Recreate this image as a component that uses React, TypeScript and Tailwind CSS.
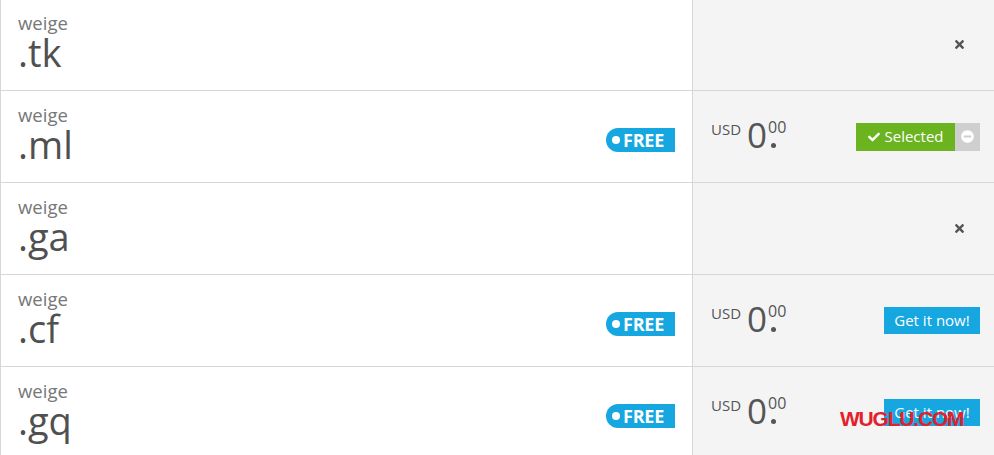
import { FaCheck, FaMinusCircle, FaTimes } from 'react-icons/fa'

type Row = {
  tld: string
  status: 'taken' | 'selected' | 'available'
}

const rows: Row[] = [
  { tld: '.tk', status: 'taken' },
  { tld: '.ml', status: 'selected' },
  { tld: '.ga', status: 'taken' },
  { tld: '.cf', status: 'available' },
  { tld: '.gq', status: 'available' },
]

function FreeBadge() {
  return (
    <div className="mt-[7px] flex h-[24px] w-[69px] items-center gap-[3px] rounded-l-full rounded-r-[3px] bg-[#16a6e0] pl-[6px] text-white">
      <span className="h-[8px] w-[8px] rounded-full bg-white"></span>
      <span className="text-[18px] font-bold leading-none tracking-[-0.2px]">FREE</span>
    </div>
  )
}

function Price() {
  return (
    <div className="mb-[4px] flex items-start text-[#555]">
      <span className="mr-[6px] mt-[5px] text-[15px] leading-none">USD</span>
      <span className="text-[35px] leading-none">0</span>
      <span className="relative ml-[1px] mt-[2px] text-[16px] leading-none">
        00
        <span className="absolute left-[3px] top-[24px] h-[5px] w-[5px] rounded-full bg-[#555]"></span>
      </span>
    </div>
  )
}

export default function App() {
  return (
    <div className="relative h-[455px] w-[994px] overflow-hidden bg-white font-['Open_Sans',sans-serif]">
      <div className="-mt-[1px]">
        {rows.map((row) => (
          <div key={row.tld} className="flex h-[92px] border-b border-[#d6d6d6]">
            {/* Domain */}
            <div className="flex flex-1 items-center justify-between border-l border-r border-[#d6d6d6] pl-[17px] pr-[17px]">
              <div className="mb-[6px]">
                <div className="text-[18.5px] leading-[20px] text-[#777]">weige</div>
                <div className="text-[38px] leading-[38px] text-[#505050]">{row.tld}</div>
              </div>
              {row.status !== 'taken' && <FreeBadge />}
            </div>

            {/* Price / action */}
            <div className="flex w-[301px] items-center justify-between bg-[#f4f4f4] pl-[18px] pr-[14px]">
              {row.status === 'taken' ? (
                <>
                  <span></span>
                  <FaTimes className="mr-[14px] text-[13px] text-[#555]" />
                </>
              ) : (
                <>
                  <Price />
                  {row.status === 'selected' ? (
                    <div className="flex h-[28px]">
                      <div className="flex w-[99px] items-center justify-center gap-[5px] bg-[#6bb31f] text-[15px] text-white">
                        <FaCheck className="text-[12px]" />
                        Selected
                      </div>
                      <div className="flex w-[25px] items-center justify-center bg-[#cfcfcf]">
                        <FaMinusCircle className="text-[13px] text-white" />
                      </div>
                    </div>
                  ) : (
                    <div className="flex h-[27px] w-[96px] items-center justify-center bg-[#16a6e0] text-[15px] text-white">
                      Get it now!
                    </div>
                  )}
                </>
              )}
            </div>
          </div>
        ))}
      </div>

      {/* watermark */}
      <div className="absolute left-[840px] top-[403px] font-['Liberation_Sans',sans-serif] text-[21px] font-bold tracking-[-1.2px] text-[#e3202b]">
        WUGLU.COM
      </div>
    </div>
  )
}
